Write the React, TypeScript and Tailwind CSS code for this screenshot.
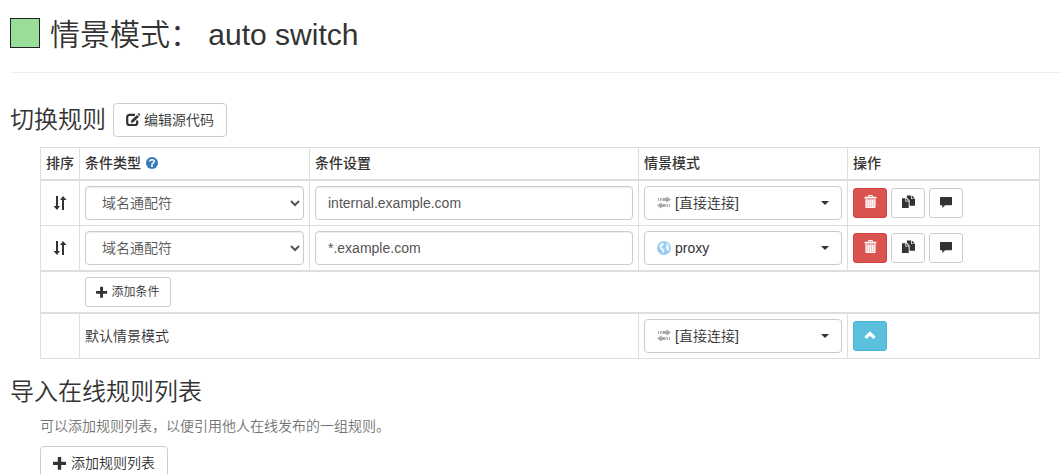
import type { ReactNode } from "react";

type IconProps = { className?: string };

function Svg({ children, className = "size-3.5" }: { children: ReactNode; className?: string }) {
  return (
    <svg viewBox="0 0 14 14" fill="currentColor" aria-hidden="true" className={`${className} shrink-0`}>
      {children}
    </svg>
  );
}

const EditIcon = () => (
  <Svg>
    <path
      d="M9 1.9H3.6Q1.2 1.9 1.2 4.2V9.7Q1.2 12 3.6 12H8.9Q11.2 12 11.2 9.7V7.6"
      fill="none"
      stroke="currentColor"
      strokeWidth="2.2"
    />
    <path d="M11 1.9L13 3.8L7.4 9.3L4.7 10L5.4 7.3ZM11.7 1.2L12.6 .3Q13 0 13.4 .4L14 1.1Q14.300 1.600 14 2L13.500 3Z" />
  </Svg>
);

const SortIcon = () => (
  <Svg>
    <path d="M3 0H5V10H7L4 14L.5 10H3ZM9 14H11V4H13.500L10 0L7 4H9Z" />
  </Svg>
);

const PlusIcon = ({ className }: IconProps) => (
  <Svg className={className}>
    <path d="M5.300 1h2.400q.5 0 .5.5v4.200h4.300q.5 0 .5.5v2.400q0 .5-.5.5h-4.300v4.100q0 .5-.5.5h-2.400q-.5 0-.5-.5v-4.100h-4.300q-.5 0-.5-.5v-2.400q0-.5.5-.5h4.300v-4.200q0-.5.500-.5z" />
  </Svg>
);

const QuestionIcon = () => (
  <Svg className="size-3">
    <circle cx="7" cy="7" r="7" />
    <path d="M4.400 5.300Q4.500 3.200 7 3.200T9.600 5.200Q9.600 6.300 8.300 6.900Q7.700 7.200 7.700 8H6" fill="none" stroke="#fff" strokeWidth="1.700" />
    <path d="M5.900 9.400h2.200v1.900h-2.200z" fill="#fff" />
  </Svg>
);

const TrashIcon = () => (
  <Svg className="size-[13px]">
    <path d="M4.500 2V.9Q4.500 0 5.400 0H8.600Q9.500 0 9.500.9V2H12.600Q13.500 2 13.500 3V3.700H.5V3Q.5 2 1.400 2ZM5.700 1.100V2H8.300V1.100Z" />
    <path d="M1.700 4.700H12.300V13Q12.300 14 11.300 14H2.700Q1.700 14 1.700 13Z" fillOpacity=".68" />
    <path d="M1.700 4.700H2.800V14Q1.700 14 1.700 13ZM4.200 5.500h1V12.500h-1ZM6.500 5.500h1V12.500h-1ZM8.800 5.500h1V12.500h-1ZM11.200 4.700H12.300V13Q12.300 14 11.200 14ZM2 12.900H12V14H2Z" />
  </Svg>
);

const CopyIcon = () => (
  <Svg className="size-[13px]">
    <path d="M0 3.500H3.600V7H7.200V14H0ZM4.500 3.500L7.200 6.100H4.500Z" />
    <path d="M5.200 .5H9.800V4.400H14V11.700H8.200V5.800L5.200 2.800ZM10.600.5L14 3.700H10.600Z" />
  </Svg>
);

const CommentIcon = () => (
  <Svg className="size-3">
    <path d="M.7 1.200H13.300Q14 1.200 14 1.900V10Q14 10.800 13.300 10.800H6L2.700 13.900V10.800H.7Q0 10.800 0 10V1.900Q0 1.200.7 1.200Z" />
  </Svg>
);

const ChevronUpIcon = () => (
  <Svg className="size-3">
    <path d="M7 2.500L13.600 9L10.900 11.700L7 7.900L3.100 11.700L.4 9Z" />
  </Svg>
);

const TransferIcon = () => (
  <Svg className="size-3.5 text-[#aaa]">
    <path d="M1 2h1v3h-1zM3 2h1.500v3h-1.500zM5.500 2H9.500V.3L14 3.500L9.500 6.700V5H5.500ZM13 8h-1v3h1zM11 8h-1.500v3H11zM8.500 8H4.500V6.300L0 9.500L4.500 12.700V11H8.500Z" />
  </Svg>
);

const GlobeIcon = () => (
  <Svg className="size-3.5 text-[#99ccee]">
    <circle cx="7" cy="7" r="7" />
    <path
      d="M3 3.200L5 1.700L6.700 1.900L6.300 3L7.200 3.600L5.900 4.700L5.500 6L4.200 6.200L4.500 7.300L6.300 7.500L7.600 8.800L6.900 10.200L6.200 12.500L5.300 11.300L5 9.500L3.300 8L2.500 6L2.200 4.500ZM9 2.300L11 2.800L12.200 4.700L11.700 5.600L12.500 7.600L11.600 9.700L10.500 10.200L10 8.200L8.600 7.300L8.700 5.700L10 4.800L9.300 3.800Z"
      fill="#fff"
      fillOpacity=".8"
    />
  </Svg>
);

const field =
  "block h-[34px] w-full rounded border border-[#ccc] bg-white px-3 py-1.5 text-sm leading-5 text-[#555] shadow-[inset_0_1px_1px_rgba(0,0,0,0.075)]";
const button = "inline-flex items-center justify-center gap-1 border";
const white = "border-[#ccc] bg-white text-[#333]";
const medium = "h-[34px] rounded px-3 text-sm";
const square = "h-[30px] w-[34px] rounded-[3px] pb-0.5";
const cell = "border border-[#ddd] p-[5px] text-left align-middle";
const heading = `${cell} border-b-2 font-medium`;

function ProfilePicker({ icon, name, label }: { icon: ReactNode; name: string; label: string }) {
  return (
    <button type="button" aria-haspopup="listbox" aria-label={`${label} ${name}`} className={`${button} ${white} ${medium} w-full`}>
      {icon}
      <span className="grow text-left">{name}</span>
      <span className="border-x-4 border-t-4 border-x-transparent border-t-[#333]" />
    </button>
  );
}

function Rule({ pattern, icon, profile }: { pattern: string; icon: ReactNode; profile: string }) {
  return (
    <tr>
      <td className={cell}>
        <span className="flex justify-center">
          <SortIcon />
        </span>
      </td>
      <td className={cell}>
        <select aria-label="条件类型" className={field}>
          <option>域名通配符</option>
        </select>
      </td>
      <td className={cell}>
        <input type="text" aria-label="条件设置" defaultValue={pattern} className={field} />
      </td>
      <td className={cell}>
        <ProfilePicker icon={icon} name={profile} label="情景模式" />
      </td>
      <td className={cell}>
        <div className="flex gap-1">
          <button type="button" aria-label="删除" className={`${button} ${square} border-[#d43f3a] bg-[#d9534f] text-white`}>
            <TrashIcon />
          </button>
          <button type="button" aria-label="复制" className={`${button} ${square} ${white}`}>
            <CopyIcon />
          </button>
          <button type="button" aria-label="备注" className={`${button} ${square} ${white}`}>
            <CommentIcon />
          </button>
        </div>
      </td>
    </tr>
  );
}

export default function App() {
  return (
    <main className="bg-white pl-2.5 font-['Liberation_Sans','Noto_Sans_CJK_SC',sans-serif] text-sm leading-5 font-[350] text-[#333]">
      <header className="flex items-center gap-2.5 border-b border-[#eee] pt-[18px] pb-6">
        <span className="size-[30px] border border-[#222] bg-[#99dd99]" />
        <h1 className="pt-1 text-3xl leading-[26px] font-[350]">情景模式： auto switch</h1>
      </header>

      <section className="mt-[30px]">
        <div className="flex items-center gap-[7px]">
          <h2 className="text-2xl leading-6 font-[350]">切换规则</h2>
          <button type="button" className={`${button} ${white} ${medium}`}>
            <EditIcon />
            编辑源代码
          </button>
        </div>
        <div className="mt-2.5 mr-[21px] ml-[30px]">
          <table className="w-full table-fixed border-collapse">
            <colgroup>
              <col className="w-[39px]" />
              <col className="w-[230px]" />
              <col />
              <col className="w-[209px]" />
              <col className="w-[192px]" />
            </colgroup>
            <thead>
              <tr className="h-8 border-b-2 border-[#ddd]">
                <th className={heading}>排序</th>
                <th className={heading}>
                  <span className="flex items-center gap-[5px]">
                    条件类型
                    <a href="#condition-help" aria-label="帮助" className="text-[#337ab7]">
                      <QuestionIcon />
                    </a>
                  </span>
                </th>
                <th className={heading}>条件设置</th>
                <th className={heading}>情景模式</th>
                <th className={heading}>操作</th>
              </tr>
            </thead>
            <tbody>
              <Rule pattern="internal.example.com" icon={<TransferIcon />} profile="[直接连接]" />
              <Rule pattern="*.example.com" icon={<GlobeIcon />} profile="proxy" />
            </tbody>
            <tbody className="border-t-2 border-[#ddd]">
              <tr>
                <td className={`${cell} border-t-2 border-r-0`} />
                <td colSpan={4} className={`${cell} border-t-2 border-l-0`}>
                  <button type="button" className={`${button} ${white} flex h-[30px] rounded-[3px] px-2.5 text-xs`}>
                    <PlusIcon className="size-3" />
                    添加条件
                  </button>
                </td>
              </tr>
            </tbody>
            <tbody className="border-t-2 border-[#ddd]">
              <tr>
                <td className={`${cell} border-t-2`} />
                <td colSpan={2} className={`${cell} border-t-2`}>
                  默认情景模式
                </td>
                <td className={`${cell} border-t-2`}>
                  <ProfilePicker icon={<TransferIcon />} name="[直接连接]" label="默认情景模式" />
                </td>
                <td className={`${cell} border-t-2`}>
                  <button type="button" aria-label="折叠" className={`${button} ${square} flex border-[#46b8da] bg-[#5bc0de] text-white`}>
                    <ChevronUpIcon />
                  </button>
                </td>
              </tr>
            </tbody>
          </table>
        </div>
      </section>

      <section className="mt-[21px]">
        <h2 className="text-2xl leading-6 font-[350]">导入在线规则列表</h2>
        <div className="ml-[30px]">
          <p className="mt-3 mb-2.5 text-[#737373]">可以添加规则列表，以便引用他人在线发布的一组规则。</p>
          <button type="button" className={`${button} ${white} ${medium}`}>
            <PlusIcon />
            添加规则列表
          </button>
        </div>
      </section>
    </main>
  );
}
